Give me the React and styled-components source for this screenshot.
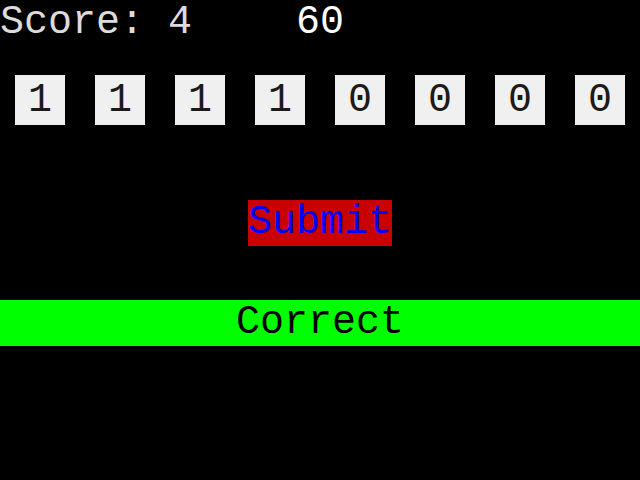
import React from 'react';
import styled, { createGlobalStyle } from 'styled-components';

const GlobalStyle = createGlobalStyle`
    html, body {
        margin: 0;
        background: #000;
        font-family: Courier, 'Nimbus Mono PS', 'Nimbus Mono L', FreeMono, 'Courier New', 'Liberation Mono', monospace;
    }
`;

const Page = styled.div`
    width: 640px;
    height: 480px;
    background: #000;
    display: flex;
    flex-direction: column;
    font-size: 40px;
    line-height: 45px;
`;

const Header = styled.div`
    display: grid;
    grid-template-columns: 1fr auto 1fr;
    height: 45px;
`;

const Score = styled.span`
    color: #dcdcdc;
    white-space: pre;
`;

const Timer = styled.span`
    color: #fff;
`;

const Bits = styled.div`
    display: grid;
    grid-template-columns: repeat(8, 80px);
    margin-top: 30px;
`;

const Bit = styled.div`
    width: 50px;
    height: 50px;
    margin: 0 auto;
    background: #f0f0f0;
    color: #1a1a1a;
    display: flex;
    align-items: center;
    justify-content: center;
`;

const SubmitRow = styled.div`
    display: flex;
    justify-content: center;
    margin-top: 75px;
`;

const SubmitButton = styled.button`
    font: inherit;
    line-height: 46px;
    height: 46px;
    padding: 0;
    border: none;
    background: #c80000;
    color: #0000ff;
`;

const Result = styled.div`
    margin-top: 54px;
    height: 46px;
    line-height: 46px;
    background: ${props => props.ok ? '#00ff00' : '#ff0000'};
    color: #000;
    text-align: center;
`;

const bits = [1, 1, 1, 1, 0, 0, 0, 0];

const App = () => {
    return (
        <Page>
            <GlobalStyle />
            <Header>
                <Score>Score: 4</Score>
                <Timer>60</Timer>
                <span />
            </Header>

            <Bits>
                {bits.map((b, i) => (
                    <Bit key={i}>{b}</Bit>
                ))}
            </Bits>

            <SubmitRow>
                <SubmitButton>Submit</SubmitButton>
            </SubmitRow>

            <Result ok>Correct</Result>
        </Page>
    );
};

export default App;
